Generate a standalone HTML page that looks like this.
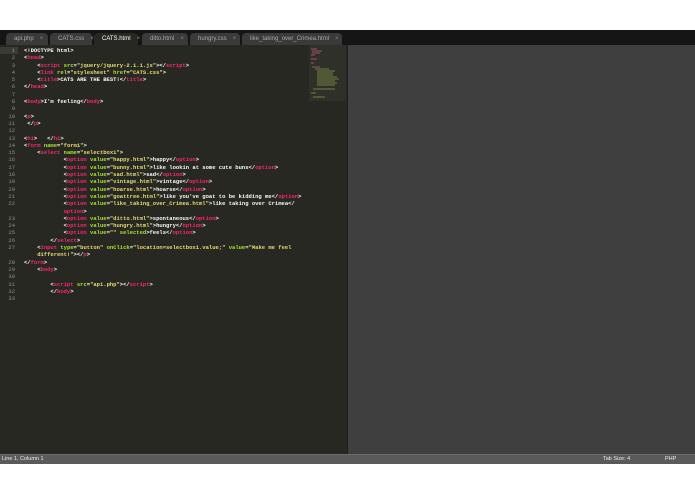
<!DOCTYPE html>
<html><head><style>
*{margin:0;padding:0;box-sizing:border-box}
body{width:695px;height:494px;background:#fff;position:relative;overflow:hidden;font-family:"Liberation Sans",sans-serif}
#top{position:absolute;left:0;top:30px;width:695px;height:15px;background:#151515}
.tab{position:absolute;top:33px;height:12px;background:#3a3a3a;border-radius:4px 4px 0 0;color:#aaa;font-size:6px;line-height:12px;padding-left:8px;white-space:nowrap}
.tab.a{background:#272822;color:#fff}
.tab span{color:#888;margin-left:6px}
#left{position:absolute;left:0;top:45px;width:347px;height:410px;background:#272822}
#right{position:absolute;left:347px;top:45px;width:348px;height:410px;background:#3f3f3f;border-left:1px solid #1e1e1e}
#mm{position:absolute;left:309px;top:45px;width:37px;height:56px;background:#2f302a}
#gut{position:absolute;left:0;top:47px;width:15px;font:5.5px/7.3px "Liberation Mono",monospace;color:#8f908a;text-align:right;white-space:pre}
#code{position:absolute;left:24px;top:47px;font:bold 5.5px/7.3px "Liberation Mono",monospace;color:#f8f8f2;white-space:pre}
.t{color:#f92672}.n{color:#a6e22e}.s{color:#e6db74}
#hl{position:absolute;left:0;top:47px;width:18px;height:7.3px;background:#3a3b35}
#status{position:absolute;left:0;top:454px;width:695px;height:10px;background:#5a5a5a;border-top:1px solid #6a6a6a;color:#eee;font-size:5.5px;line-height:9px}
</style></head><body>
<div id="top"></div>
<div class="tab" style="left:6px;width:42px">api.php<span>×</span></div>
<div class="tab" style="left:50px;width:42px">CATS.css<span>×</span></div>
<div class="tab a" style="left:94px;width:44px">CATS.html<span>×</span></div>
<div class="tab" style="left:142px;width:46px">ditto.html<span>×</span></div>
<div class="tab" style="left:190px;width:50px">hungry.css<span>×</span></div>
<div class="tab" style="left:242px;width:100px">like_taking_over_Crimea.html<span>×</span></div>
<div id="left"></div><div id="right"></div>
<div id="mm"><svg width="37" height="56"><g stroke-width="1"><path d="M2 4h6M3 6h10M3 8h8M2 10h4M2 14h6M2 18h3M3 22h8" stroke="#a05060"/><path d="M6 24h14M8 26h18M8 28h16M8 30h16M8 32h20M8 34h22M8 36h18M8 38h20M8 40h18M4 44h22M2 48h5M4 52h12" stroke="#708040"/></g></svg></div>
<div id="hl"></div>
<div id="gut">1
2
3
4
5
6
7
8
9
10
11
12
13
14
15
16
17
18
19
20
21
22

23
24
25
26
27

28
29
30
31
32
33</div>
<div id="code">&lt;!DOCTYPE html&gt;
&lt;<span class="t">head</span>&gt;
    &lt;<span class="t">script</span> <span class="n">src</span>=<span class="s">"jquery/jquery-2.1.1.js"</span>&gt;&lt;/<span class="t">script</span>&gt;
    &lt;<span class="t">link</span> <span class="n">rel</span>=<span class="s">"stylesheet"</span> <span class="n">href</span>=<span class="s">"CATS.css"</span>&gt;
    &lt;<span class="t">title</span>&gt;CATS ARE THE BEST!&lt;/<span class="t">title</span>&gt;
&lt;/<span class="t">head</span>&gt;

&lt;<span class="t">body</span>&gt;I'm feeling&lt;/<span class="t">body</span>&gt;

&lt;<span class="t">p</span>&gt;
 &lt;/<span class="t">p</span>&gt;

&lt;<span class="t">h1</span>&gt;   &lt;/<span class="t">h1</span>&gt;
&lt;<span class="t">form</span> <span class="n">name</span>=<span class="s">"form1"</span>&gt;
    &lt;<span class="t">select</span> <span class="n">name</span>=<span class="s">"selectbox1"</span>&gt;
            &lt;<span class="t">option</span> <span class="n">value</span>=<span class="s">"happy.html"</span>&gt;happy&lt;/<span class="t">option</span>&gt;
            &lt;<span class="t">option</span> <span class="n">value</span>=<span class="s">"bunny.html"</span>&gt;like lookin at some cute buns&lt;/<span class="t">option</span>&gt;
            &lt;<span class="t">option</span> <span class="n">value</span>=<span class="s">"sad.html"</span>&gt;sad&lt;/<span class="t">option</span>&gt;
            &lt;<span class="t">option</span> <span class="n">value</span>=<span class="s">"vintage.html"</span>&gt;vintage&lt;/<span class="t">option</span>&gt;
            &lt;<span class="t">option</span> <span class="n">value</span>=<span class="s">"hoarse.html"</span>&gt;hoarse&lt;/<span class="t">option</span>&gt;
            &lt;<span class="t">option</span> <span class="n">value</span>=<span class="s">"goattree.html"</span>&gt;like you've goat to be kidding me&lt;/<span class="t">option</span>&gt;
            &lt;<span class="t">option</span> <span class="n">value</span>=<span class="s">"like_taking_over_Crimea.html"</span>&gt;like taking over Crimea&lt;/
            <span class="t">option</span>&gt;
            &lt;<span class="t">option</span> <span class="n">value</span>=<span class="s">"ditto.html"</span>&gt;spontaneous&lt;/<span class="t">option</span>&gt;
            &lt;<span class="t">option</span> <span class="n">value</span>=<span class="s">"hungry.html"</span>&gt;hungry&lt;/<span class="t">option</span>&gt;
            &lt;<span class="t">option</span> <span class="n">value</span>=<span class="s">""</span> <span class="n">selected</span>&gt;feels&lt;/<span class="t">option</span>&gt;
        &lt;/<span class="t">select</span>&gt;
    &lt;<span class="t">input</span> <span class="n">type</span>=<span class="s">"button"</span> <span class="n">onClick</span>=<span class="s">"location=selectbox1.value;"</span> <span class="n">value</span>=<span class="s">"Make me feel</span>
<span class="s">    different!"</span>&gt;&lt;/<span class="t">p</span>&gt;
&lt;/<span class="t">form</span>&gt;
    &lt;<span class="t">body</span>&gt;

        &lt;<span class="t">script</span> <span class="n">src</span>=<span class="s">"api.php"</span>&gt;&lt;/<span class="t">script</span>&gt;
        &lt;/<span class="t">body</span>&gt;
</div>
<div id="status"><span style="position:absolute;left:2px">Line 1, Column 1</span><span style="position:absolute;left:603px">Tab Size: 4</span><span style="position:absolute;left:665px">PHP</span></div>
</body></html>
